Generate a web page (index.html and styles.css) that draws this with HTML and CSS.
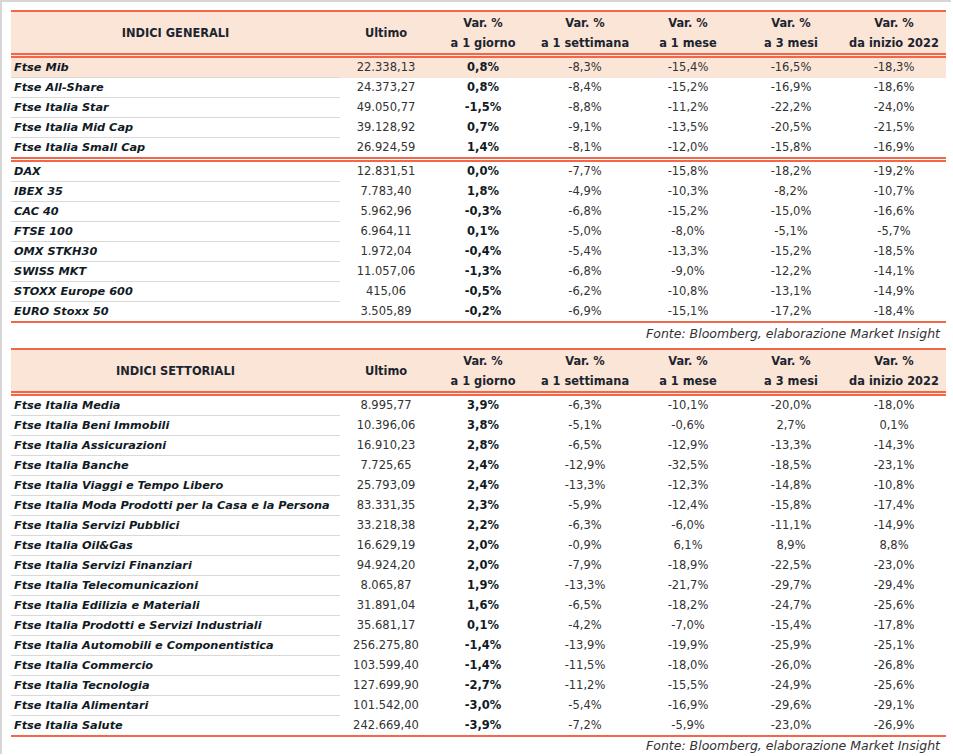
FILE: index.html
```html
<!DOCTYPE html>
<html lang="it">
<head>
<meta charset="utf-8">
<title>Indici</title>
<link rel="stylesheet" href="styles.css">
</head>
<body>
<div class="frame">
  <table class="tbl">
    <colgroup>
      <col class="c-label"><col class="c-last"><col class="c-a"><col class="c-b"><col class="c-c"><col class="c-d"><col class="c-e">
    </colgroup>
    <thead>
      <tr>
        <th class="label-h">INDICI GENERALI</th>
        <th>Ultimo</th>
        <th>Var. %<br>a 1 giorno</th>
        <th>Var. %<br>a 1 settimana</th>
        <th>Var. %<br>a 1 mese</th>
        <th>Var. %<br>a 3 mesi</th>
        <th>Var. %<br>da inizio 2022</th>
      </tr>
    </thead>
    <tbody>
      <tr class="hl"><td class="lbl">Ftse Mib</td><td>22.338,13</td><td class="b">0,8%</td><td>-8,3%</td><td>-15,4%</td><td>-16,5%</td><td>-18,3%</td></tr>
      <tr><td class="lbl">Ftse All-Share</td><td>24.373,27</td><td class="b">0,8%</td><td>-8,4%</td><td>-15,2%</td><td>-16,9%</td><td>-18,6%</td></tr>
      <tr><td class="lbl">Ftse Italia Star</td><td>49.050,77</td><td class="b">-1,5%</td><td>-8,8%</td><td>-11,2%</td><td>-22,2%</td><td>-24,0%</td></tr>
      <tr><td class="lbl">Ftse Italia Mid Cap</td><td>39.128,92</td><td class="b">0,7%</td><td>-9,1%</td><td>-13,5%</td><td>-20,5%</td><td>-21,5%</td></tr>
      <tr class="grp"><td class="lbl">Ftse Italia Small Cap</td><td>26.924,59</td><td class="b">1,4%</td><td>-8,1%</td><td>-12,0%</td><td>-15,8%</td><td>-16,9%</td></tr>
      <tr><td class="lbl">DAX</td><td>12.831,51</td><td class="b">0,0%</td><td>-7,7%</td><td>-15,8%</td><td>-18,2%</td><td>-19,2%</td></tr>
      <tr><td class="lbl">IBEX 35</td><td>7.783,40</td><td class="b">1,8%</td><td>-4,9%</td><td>-10,3%</td><td>-8,2%</td><td>-10,7%</td></tr>
      <tr><td class="lbl">CAC 40</td><td>5.962,96</td><td class="b">-0,3%</td><td>-6,8%</td><td>-15,2%</td><td>-15,0%</td><td>-16,6%</td></tr>
      <tr><td class="lbl">FTSE 100</td><td>6.964,11</td><td class="b">0,1%</td><td>-5,0%</td><td>-8,0%</td><td>-5,1%</td><td>-5,7%</td></tr>
      <tr><td class="lbl">OMX STKH30</td><td>1.972,04</td><td class="b">-0,4%</td><td>-5,4%</td><td>-13,3%</td><td>-15,2%</td><td>-18,5%</td></tr>
      <tr><td class="lbl">SWISS MKT</td><td>11.057,06</td><td class="b">-1,3%</td><td>-6,8%</td><td>-9,0%</td><td>-12,2%</td><td>-14,1%</td></tr>
      <tr><td class="lbl">STOXX Europe 600</td><td>415,06</td><td class="b">-0,5%</td><td>-6,2%</td><td>-10,8%</td><td>-13,1%</td><td>-14,9%</td></tr>
      <tr class="last"><td class="lbl">EURO Stoxx 50</td><td>3.505,89</td><td class="b">-0,2%</td><td>-6,9%</td><td>-15,1%</td><td>-17,2%</td><td>-18,4%</td></tr>
    </tbody>
  </table>
  <div class="src src-1">Fonte: Bloomberg, elaborazione Market Insight</div>

  <table class="tbl">
    <colgroup>
      <col class="c-label"><col class="c-last"><col class="c-a"><col class="c-b"><col class="c-c"><col class="c-d"><col class="c-e">
    </colgroup>
    <thead>
      <tr>
        <th class="label-h">INDICI SETTORIALI</th>
        <th>Ultimo</th>
        <th>Var. %<br>a 1 giorno</th>
        <th>Var. %<br>a 1 settimana</th>
        <th>Var. %<br>a 1 mese</th>
        <th>Var. %<br>a 3 mesi</th>
        <th>Var. %<br>da inizio 2022</th>
      </tr>
    </thead>
    <tbody>
      <tr><td class="lbl">Ftse Italia Media</td><td>8.995,77</td><td class="b">3,9%</td><td>-6,3%</td><td>-10,1%</td><td>-20,0%</td><td>-18,0%</td></tr>
      <tr><td class="lbl">Ftse Italia Beni Immobili</td><td>10.396,06</td><td class="b">3,8%</td><td>-5,1%</td><td>-0,6%</td><td>2,7%</td><td>0,1%</td></tr>
      <tr><td class="lbl">Ftse Italia Assicurazioni</td><td>16.910,23</td><td class="b">2,8%</td><td>-6,5%</td><td>-12,9%</td><td>-13,3%</td><td>-14,3%</td></tr>
      <tr><td class="lbl">Ftse Italia Banche</td><td>7.725,65</td><td class="b">2,4%</td><td>-12,9%</td><td>-32,5%</td><td>-18,5%</td><td>-23,1%</td></tr>
      <tr><td class="lbl">Ftse Italia Viaggi e Tempo Libero</td><td>25.793,09</td><td class="b">2,4%</td><td>-13,3%</td><td>-12,3%</td><td>-14,8%</td><td>-10,8%</td></tr>
      <tr><td class="lbl">Ftse Italia Moda Prodotti per la Casa e la Persona</td><td>83.331,35</td><td class="b">2,3%</td><td>-5,9%</td><td>-12,4%</td><td>-15,8%</td><td>-17,4%</td></tr>
      <tr><td class="lbl">Ftse Italia Servizi Pubblici</td><td>33.218,38</td><td class="b">2,2%</td><td>-6,3%</td><td>-6,0%</td><td>-11,1%</td><td>-14,9%</td></tr>
      <tr><td class="lbl">Ftse Italia Oil&amp;Gas</td><td>16.629,19</td><td class="b">2,0%</td><td>-0,9%</td><td>6,1%</td><td>8,9%</td><td>8,8%</td></tr>
      <tr><td class="lbl">Ftse Italia Servizi Finanziari</td><td>94.924,20</td><td class="b">2,0%</td><td>-7,9%</td><td>-18,9%</td><td>-22,5%</td><td>-23,0%</td></tr>
      <tr><td class="lbl">Ftse Italia Telecomunicazioni</td><td>8.065,87</td><td class="b">1,9%</td><td>-13,3%</td><td>-21,7%</td><td>-29,7%</td><td>-29,4%</td></tr>
      <tr><td class="lbl">Ftse Italia Edilizia e Materiali</td><td>31.891,04</td><td class="b">1,6%</td><td>-6,5%</td><td>-18,2%</td><td>-24,7%</td><td>-25,6%</td></tr>
      <tr><td class="lbl">Ftse Italia Prodotti e Servizi Industriali</td><td>35.681,17</td><td class="b">0,1%</td><td>-4,2%</td><td>-7,0%</td><td>-15,4%</td><td>-17,8%</td></tr>
      <tr><td class="lbl">Ftse Italia Automobili e Componentistica</td><td>256.275,80</td><td class="b">-1,4%</td><td>-13,9%</td><td>-19,9%</td><td>-25,9%</td><td>-25,1%</td></tr>
      <tr><td class="lbl">Ftse Italia Commercio</td><td>103.599,40</td><td class="b">-1,4%</td><td>-11,5%</td><td>-18,0%</td><td>-26,0%</td><td>-26,8%</td></tr>
      <tr><td class="lbl">Ftse Italia Tecnologia</td><td>127.699,90</td><td class="b">-2,7%</td><td>-11,2%</td><td>-15,5%</td><td>-24,9%</td><td>-25,6%</td></tr>
      <tr><td class="lbl">Ftse Italia Alimentari</td><td>101.542,00</td><td class="b">-3,0%</td><td>-5,4%</td><td>-16,9%</td><td>-29,6%</td><td>-29,1%</td></tr>
      <tr class="last"><td class="lbl">Ftse Italia Salute</td><td>242.669,40</td><td class="b">-3,9%</td><td>-7,2%</td><td>-5,9%</td><td>-23,0%</td><td>-26,9%</td></tr>
    </tbody>
  </table>
  <div class="src src-2">Fonte: Bloomberg, elaborazione Market Insight</div>
</div>
</body>
</html>
```

FILE: styles.css
```css
html, body {
  margin: 0;
  padding: 0;
  background: #ffffff;
}

body {
  font-family: "DejaVu Sans", "Liberation Sans", sans-serif;
  color: #333333;
}

.frame {
  width: 951px;
  height: 754px;
  border-top: 2px solid #d6d6d6;
  border-left: 2px solid #d6d6d6;
  padding: 8px 0 0 9px;
  box-sizing: border-box;
  overflow: hidden;
}

.tbl {
  width: 935px;
  border-collapse: collapse;
  table-layout: fixed;
}

.c-label { width: 329px; }
.c-last { width: 92px; }
.c-a { width: 102px; }
.c-b { width: 102px; }
.c-c { width: 104px; }
.c-d { width: 102px; }
.c-e { width: 104px; }

.tbl thead th {
  background: #fbe5d6;
  border-top: 2px solid #f2664a;
  border-bottom: 5px double #f2664a;
  padding: 1px 0 0 0;
  height: 40px;
  line-height: 20px;
  font-size: 11.4px;
  font-weight: bold;
  color: #1b2430;
  text-align: center;
  vertical-align: middle;
}

.tbl td {
  padding: 0;
  height: 19px;
  line-height: 19px;
  font-size: 11.5px;
  text-align: center;
  border-bottom: 1px solid transparent;
  white-space: nowrap;
  color: #333333;
}

.tbl td.lbl {
  text-align: left;
  padding-left: 3px;
  font-size: 11.3px;
  font-weight: bold;
  font-style: italic;
  color: #111a24;
  border-bottom: 1px solid #d9d9d9;
}

.tbl td.b {
  font-weight: bold;
  color: #111a24;
}

.tbl tr.hl td {
  background: #fbe5d6;
}

.tbl tr.grp td,
.tbl tr.grp td.lbl {
  border-bottom: 5px double #f2664a;
}

.tbl tr.last td,
.tbl tr.last td.lbl {
  border-bottom: 2px solid #f2664a;
}

.src {
  text-align: right;
  font-style: italic;
  font-size: 12.5px;
  color: #333333;
  width: 935px;
  padding-right: 6px;
  box-sizing: border-box;
}

.src-1 {
  padding-top: 3px;
  line-height: 16px;
  margin-bottom: 6px;
}

.src-2 {
  padding-top: 0;
  line-height: 18px;
}
```
